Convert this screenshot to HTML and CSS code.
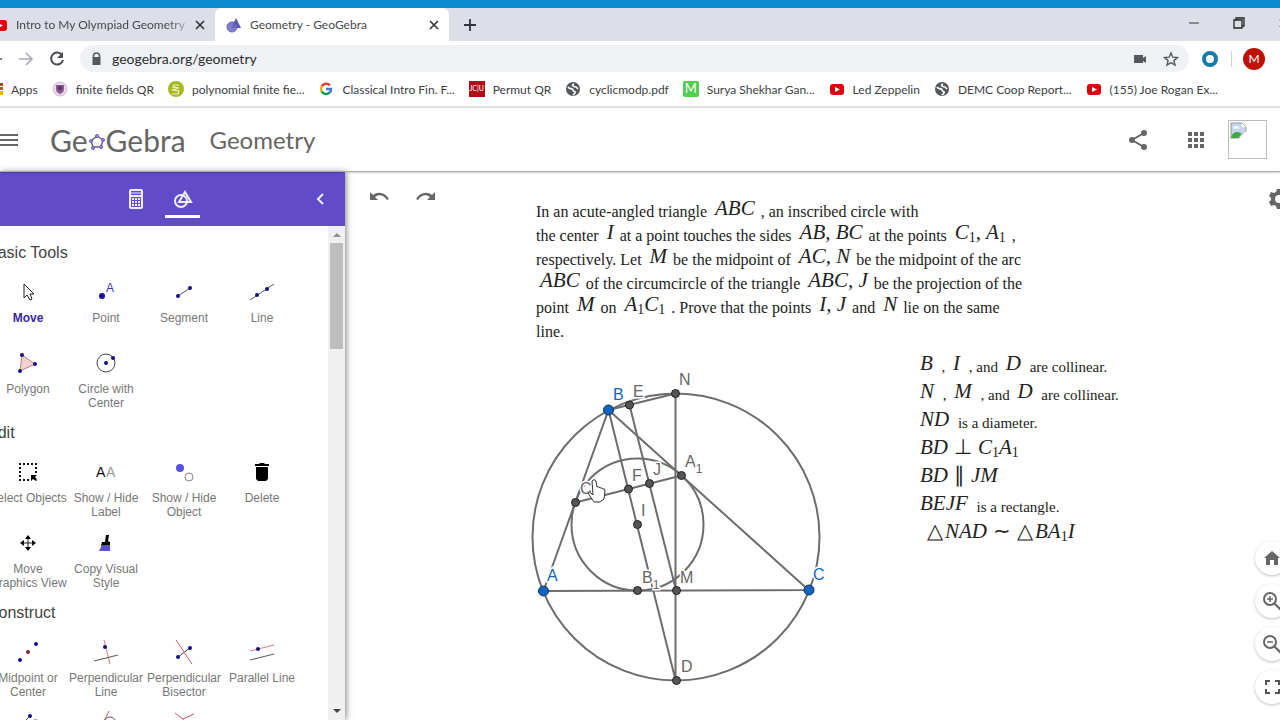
FILE: index.html
```html
<!DOCTYPE html>
<html lang="en">
<head>
    <meta charset="UTF-8">
    <meta name="viewport" content="width=device-width, initial-scale=1.0">
    <title>Geometry - GeoGebra</title>
    <link rel="stylesheet" href="styles.css">
</head>
<body>
    <svg class="defs" aria-hidden="true">
        <symbol id="youtube" viewBox="0 0 16 16">
            <rect x="1" y="3" width="14" height="11" rx="3" fill="#e0000c"/>
            <path d="M6 6l5 2.500-5 2.500z" fill="#fff"/>
        </symbol>
        <symbol id="globe" viewBox="0 0 16 16">
            <circle cx="8" cy="8" r="7" fill="#54575b"/>
            <path d="M3 6c2 3 5 1 5 3s3 1 2 3l-2 2M9 3c-3 1-1 3 2 3l2 2" fill="none" stroke="#fff" stroke-width="1.600"/>
        </symbol>
        <symbol id="close" viewBox="0 0 12 12">
            <path d="M2 2l8 8M10 2l-8 8" stroke="#33363a" stroke-width="1.700"/>
        </symbol>
    </svg>

    <div class="topline"></div>
    <div class="tabs">
        <div class="tab">
            <svg class="icon"><use href="#youtube"/></svg>
            <span class="tab-title fade">Intro to My Olympiad Geometry</span>
            <button class="tab-close" aria-label="Close tab"><svg><use href="#close"/></svg></button>
        </div>
        <div class="tab active">
            <svg class="icon" viewBox="0 0 16 16">
                <path d="M10 1l5 10H5z" fill="#5b55b8"/>
                <circle cx="6" cy="10" r="5" fill="#6b69c4" fill-opacity=".85" stroke="#6461a8"/>
            </svg>
            <span class="tab-title">Geometry - GeoGebra</span>
            <button class="tab-close" aria-label="Close tab"><svg><use href="#close"/></svg></button>
        </div>
        <button class="new-tab" aria-label="New tab"><svg viewBox="0 0 12 12"><path d="M6 0v12M0 6h12" stroke="#33363a" stroke-width="1.800"/></svg></button>
        <div class="window-buttons">
            <button aria-label="Minimize"><svg viewBox="0 0 12 12"><path d="M1 6h10" stroke="#333"/></svg></button>
            <button aria-label="Restore"><svg viewBox="0 0 12 12"><path d="M1 3h8v8H1zM3 3V1h8v8H9" fill="none" stroke="#222" stroke-width="1.300"/></svg></button>
            <button aria-label="Close window"><svg><use href="#close"/></svg></button>
        </div>
    </div>

    <div class="toolbar">
        <button aria-label="Back"><svg viewBox="0 0 16 16"><path d="M15 8H2M8 2L2 8l6 6" fill="none" stroke="#55585c" stroke-width="1.700"/></svg></button>
        <button aria-label="Forward"><svg viewBox="0 0 16 16"><path d="M1 8h12M8 2l6 6-6 6" fill="none" stroke="#aaacb0" stroke-width="1.700"/></svg></button>
        <button aria-label="Reload"><svg viewBox="0 0 16 16"><path d="M13 4a6 6 0 1 0 1 5" fill="none" stroke="#4a4d51" stroke-width="2"/><path d="M14 1v6H8z" fill="#4a4d51"/></svg></button>
        <div class="address">
            <svg class="lock" viewBox="0 0 12 14"><path d="M3 6V4a3 3 0 0 1 6 0v2" fill="none" stroke="#55585c" stroke-width="1.500"/><rect x="2" y="5" width="8" height="8" fill="#55585c"/></svg>
            <input type="text" aria-label="Address" value="geogebra.org/geometry">
            <svg class="camera" viewBox="0 0 16 16"><path d="M2 4h9v3l3-2v7l-3-2v2H2z" fill="#55585c"/></svg>
            <svg class="star" viewBox="0 0 16 16"><path d="M8 2l1.800 4.200 4.600.4-3.500 3 1.100 4.400L8 11.600 4 14l1.100-4.400-3.500-3 4.600-.4z" fill="none" stroke="#55585c" stroke-width="1.400"/></svg>
        </div>
        <span class="extension"></span>
        <span class="divider"></span>
        <button class="profile">M</button>
    </div>

    <nav class="bookmarks">
        <a href="#"><svg class="icon" viewBox="0 0 16 16"><path d="M0 2h4v4H0zM0 10h4v4H0z" fill="#7a9b3a"/><path d="M12 2h4v3h-4z" fill="#d93025"/><path d="M12 6h4v3h-4z" fill="#8a6d1a"/><path d="M12 10h4v4h-4z" fill="#f0b400"/></svg>Apps</a>
        <a href="#"><svg class="icon" viewBox="0 0 16 16"><circle cx="8" cy="8" r="7" fill="#e9d8ea" stroke="#d3b6ce"/><path d="M4 4h8v4c0 3-2 4-4 5-2-1-4-2-4-5z" fill="#8a5a8c"/><path d="M6 5h4v4H6z" fill="#5d3769"/></svg>finite fields QR</a>
        <a href="#"><svg class="icon" viewBox="0 0 16 16"><circle cx="8" cy="8" r="8" fill="#a8b820"/><path d="M11 4H6L5 6l6 1-7 2 7 1-1 3H4" fill="none" stroke="#f4f6d0" stroke-width="1.200"/></svg>polynomial finite fie...</a>
        <a href="#"><svg class="icon" viewBox="0 0 16 16"><g fill="none" stroke-width="2.500"><path d="M12 4.500A5 5 0 0 0 3.700 5.500" stroke="#dc4437"/><path d="M3.700 5.500a5 5 0 0 0 0 5" stroke="#f0b400"/><path d="M3.700 10.500a5 5 0 0 0 7.800 1.200" stroke="#17994f"/><path d="M11.500 11.700A5 5 0 0 0 13 8H8" stroke="#3f7ce0"/></g></svg>Classical Intro Fin. F...</a>
        <a href="#"><span class="jcu">JC|U</span>Permut QR</a>
        <a href="#"><svg class="icon"><use href="#globe"/></svg>cyclicmodp.pdf</a>
        <a href="#"><span class="mbox">M</span>Surya Shekhar Gan...</a>
        <a href="#"><svg class="icon"><use href="#youtube"/></svg>Led Zeppelin</a>
        <a href="#"><svg class="icon"><use href="#globe"/></svg>DEMC Coop Report...</a>
        <a href="#"><svg class="icon"><use href="#youtube"/></svg>(155) Joe Rogan Ex...</a>
    </nav>

    <header class="header">
        <button class="menu" aria-label="Menu"><svg viewBox="0 0 18 14"><path d="M0 2h18M0 7h18M0 12h18" stroke="#666" stroke-width="2"/></svg></button>
        <a href="#" class="logo">Ge<svg viewBox="0 0 18 18"><path d="M9 3l6 4-2 7H5L3 8z" fill="none" stroke="#666" stroke-width="1.500"/><g fill="#9b8fe8" stroke="#6557d2"><circle cx="9" cy="3" r="1.500"/><circle cx="15" cy="7" r="1.500"/><circle cx="13" cy="14" r="1.500"/><circle cx="5" cy="15" r="1.500"/><circle cx="3" cy="8" r="1.500"/></g></svg>Gebra</a>
        <h1>Geometry</h1>
        <div class="header-right">
            <button aria-label="Share"><svg viewBox="0 0 20 20"><path d="M16 3L4 10l12 7" fill="none" stroke="#666" stroke-width="2"/><g fill="#666"><circle cx="16" cy="3" r="3"/><circle cx="4" cy="10" r="3"/><circle cx="16" cy="17" r="3"/></g></svg></button>
            <button aria-label="Apps"><svg viewBox="0 0 20 20"><path d="M2 2h4v4H2zM8 2h4v4H8zM14 2h4v4h-4zM2 8h4v4H2zM8 8h4v4H8zM14 8h4v4h-4zM2 14h4v4H2zM8 14h4v4H8zM14 14h4v4h-4z" fill="#666"/></svg></button>
            <button class="avatar" aria-label="Account"><svg viewBox="0 0 16 16"><path d="M1 1h10l4 4v10H1z" fill="#c3d7f3" stroke="#999"/><path d="M3 6c0-3 5-3 6 0z" fill="#fff"/><path d="M1 14c3-6 7-5 10-3l-3 4H1z" fill="#43a843"/><path d="M11 1v4h4M8 16l8-8v8z" fill="#fff"/></svg></button>
        </div>
    </header>

    <main class="main">
        <aside class="sidebar">
            <div class="side-tabs">
                <button class="side-tab" aria-label="Algebra"><svg viewBox="0 0 16 20"><rect x="2" y="1" width="12" height="18" rx="1" fill="none" stroke="#f0edfb" stroke-width="2"/><path d="M2 4h12" stroke="#f0edfb" stroke-width="1"/><path d="M2 7h12" stroke="#f0edfb" stroke-width="2"/><path d="M4 10h2M7 10h2M10 10h2M4 13h2M7 13h2M10 13h2M4 16h2M7 16h2M10 16h2" stroke="#f0edfb" stroke-width="2"/></svg></button>
                <button class="side-tab selected" aria-label="Tools"><svg viewBox="0 0 20 20"><circle cx="8" cy="12" r="6" fill="none" stroke="#f0edfb" stroke-width="2"/><path d="M12 3l6 10H6z" fill="none" stroke="#f0edfb" stroke-width="2"/></svg></button>
                <button class="collapse" aria-label="Collapse"><svg viewBox="0 0 10 14"><path d="M8 2L3 7l5 5" fill="none" stroke="#f0edfb" stroke-width="2"/></svg></button>
            </div>
            <div class="side-body">
                <div class="tools">
                    <h2>Basic Tools</h2>
                    <div class="tool-grid">
                        <button class="tool current"><svg viewBox="0 0 24 24"><path d="M8 4v14l3-3 3 5 2-1-2-5h4z" fill="#fff" stroke="#222"/></svg>Move</button>
                        <button class="tool"><svg viewBox="0 0 24 24"><circle cx="8" cy="16" r="3" fill="#1412a0"/><text x="12" y="12" class="point-letter">A</text></svg>Point</button>
                        <button class="tool"><svg viewBox="0 0 24 24"><path d="M6 16l12-8" stroke="#555"/><circle cx="6" cy="16" r="2" fill="#111180"/><circle cx="18" cy="8" r="2" fill="#111180"/></svg>Segment</button>
                        <button class="tool"><svg viewBox="0 0 24 24"><path d="M0 20L24 4" stroke="#555"/><circle cx="7" cy="15" r="2" fill="#111180"/><circle cx="17" cy="9" r="2" fill="#111180"/></svg>Line</button>
                        <button class="tool"><svg viewBox="0 0 24 24"><path d="M6 4l13 9-15 7z" fill="#f3d2d2" stroke="#b9847c"/><g fill="#111180"><circle cx="6" cy="4" r="2"/><circle cx="19" cy="13" r="2"/><circle cx="4" cy="20" r="2"/></g></svg>Polygon</button>
                        <button class="tool"><svg viewBox="0 0 24 24"><circle cx="12" cy="12" r="9" fill="none" stroke="#444"/><circle cx="12" cy="12" r="2" fill="#111180"/><circle cx="19" cy="7" r="2" fill="#111180"/></svg>Circle with Center</button>
                    </div>
                    <h2>Edit</h2>
                    <div class="tool-grid">
                        <button class="tool"><svg viewBox="0 0 24 24"><path d="M3 4h18M3 20h11M4 3v18M20 3v11" fill="none" stroke="#111" stroke-width="2" stroke-dasharray="2 2"/><path d="M15 15h6l-2 2 2 3-1 1-3-2-2 2z" fill="#000"/></svg>Select Objects</button>
                        <button class="tool"><svg viewBox="0 0 24 24"><text x="2" y="17" class="label-a">A</text><text x="12" y="17" class="label-b">A</text></svg>Show / Hide Label</button>
                        <button class="tool"><svg viewBox="0 0 24 24"><circle cx="8" cy="8" r="4" fill="#5753df"/><circle cx="17" cy="17" r="4" fill="#fff" stroke="#888"/></svg>Show / Hide Object</button>
                        <button class="tool"><svg viewBox="0 0 24 24"><path d="M5 4h4l1-1h4l1 1h4v2H5zM6 7h12v12l-2 2H8l-2-2z" fill="#000"/></svg>Delete</button>
                        <button class="tool"><svg viewBox="0 0 24 24"><path d="M12 6v12M6 12h12" stroke="#222"/><path d="M12 4l3 4H9zM12 20l-3-4h6zM4 12l4-3v6zM20 12l-4 3V9z" fill="#000"/></svg>Move Graphics View</button>
                        <button class="tool"><svg viewBox="0 0 24 24"><path d="M12 4h3l-1 6 2 1v4H7l1-4h3z" fill="#000"/><path d="M8 14h8v6H5z" fill="#5651cf"/></svg>Copy Visual Style</button>
                    </div>
                    <h2>Construct</h2>
                    <div class="tool-grid">
                        <button class="tool"><svg viewBox="0 0 24 24"><circle cx="4" cy="20" r="2" fill="#111180"/><circle cx="12" cy="12" r="2" fill="#802030"/><circle cx="20" cy="4" r="2" fill="#111180"/></svg>Midpoint or Center</button>
                        <button class="tool"><svg viewBox="0 0 24 24"><path d="M10 0l6 24" stroke="#db7b89"/><path d="M0 21l24-6" stroke="#555"/><circle cx="11" cy="7" r="2" fill="#111180"/></svg>Perpendicular Line</button>
                        <button class="tool"><svg viewBox="0 0 24 24"><path d="M6 17l12-9" stroke="#444"/><path d="M4 0l16 24" stroke="#c95965"/><circle cx="6" cy="17" r="2" fill="#111180"/><circle cx="18" cy="8" r="2" fill="#111180"/></svg>Perpendicular Bisector</button>
                        <button class="tool"><svg viewBox="0 0 24 24"><path d="M0 11l24-6" stroke="#db7b89"/><path d="M0 20l24-6" stroke="#555"/><circle cx="8" cy="9" r="2" fill="#111180"/></svg>Parallel Line</button>
                        <button class="tool" aria-label="Angle Bisector"><svg viewBox="0 0 24 24"><path d="M14 5L6 13" stroke="#444"/><circle cx="14" cy="5" r="2" fill="#111180"/><path d="M18 8l6 2" stroke="#999"/></svg></button>
                        <button class="tool" aria-label="Tangents"><svg viewBox="0 0 24 24"><path d="M15 0L6 18" stroke="#c95965"/><circle cx="16" cy="12" r="6" fill="none" stroke="#555"/></svg></button>
                        <button class="tool" aria-label="Locus"><svg viewBox="0 0 24 24"><path d="M3 2l8 6 11-5M11 8v12" fill="none" stroke="#c95965"/></svg></button>
                    </div>
                </div>
                <div class="scrollbar">
                    <svg viewBox="0 0 8 6"><path d="M4 1l4 4H0z" fill="#909090"/></svg>
                    <div class="thumb"></div>
                    <svg viewBox="0 0 8 6"><path d="M0 1h8L4 5z" fill="#444"/></svg>
                </div>
            </div>
        </aside>

        <section class="canvas">
            <div class="history">
                <button aria-label="Undo"><svg viewBox="0 0 22 14"><path d="M2 3v8h8L7 8c4-3 9-2 12 3l2-1C17 3 10 2 5 6z" fill="#666"/></svg></button>
                <button aria-label="Redo"><svg viewBox="0 0 22 14"><path d="M20 3v8h-8l3-3C11 5 6 6 3 11l-2-1C5 3 12 2 17 6z" fill="#666"/></svg></button>
            </div>
            <button class="settings" aria-label="Settings"><svg viewBox="0 0 20 20"><path d="M8 0h4l1 3 2 1 3-1 2 4-2 2v2l2 2-2 4-3-1-2 1-1 3H8l-1-3-2-1-3 1-2-4 2-2V9L0 7l2-4 3 1 2-1z" fill="#666"/><circle cx="10" cy="10" r="4" fill="#fff"/></svg></button>

            <div class="problem">
                In an acute-angled triangle <i>ABC</i> , an inscribed circle with<br>
                the center <i>I</i> at a point touches the sides <i>AB, BC</i> at the points <i>C<sub>1</sub>, A<sub>1</sub></i> ,<br>
                respectively. Let <i>M</i> be the midpoint of <i>AC, N</i> be the midpoint of the arc<br>
                <i>ABC</i> of the circumcircle of the triangle <i>ABC, J</i> be the projection of the<br>
                point <i>M</i> on <i>A<sub>1</sub>C<sub>1</sub></i> . Prove that the points <i>I, J</i> and <i>N</i> lie on the same<br>
                line.
            </div>

            <svg class="figure" viewBox="520 360 320 340" role="img" aria-label="Triangle ABC with incircle and circumcircle">
                <g class="lines">
                    <circle cx="676" cy="537" r="143.500"/>
                    <circle cx="637.500" cy="524.500" r="66"/>
                    <path d="M543.500 591L608.500 410 808.500 590z"/>
                    <path d="M608.500 410L675.500 393.500V680z"/>
                    <path d="M629.500 405L676 590"/>
                    <path d="M575.500 502.500L681.500 475.500"/>
                </g>
                <g class="points">
                    <circle cx="629.500" cy="405" r="4"/>
                    <circle cx="675.500" cy="393.500" r="4"/>
                    <circle cx="681.500" cy="475.500" r="4"/>
                    <circle cx="649.500" cy="483.500" r="4"/>
                    <circle cx="628.500" cy="489" r="4"/>
                    <circle cx="575.500" cy="502.500" r="4"/>
                    <circle cx="637.500" cy="524.500" r="4"/>
                    <circle cx="637.500" cy="590.500" r="4"/>
                    <circle cx="676.500" cy="590.500" r="4"/>
                    <circle cx="676.500" cy="680.500" r="4"/>
                </g>
                <g class="points free">
                    <circle cx="608.500" cy="410" r="5"/>
                    <circle cx="543.500" cy="591" r="5"/>
                    <circle cx="809" cy="590" r="5"/>
                </g>
                <g class="labels">
                    <text x="633" y="397">E</text>
                    <text x="679" y="385">N</text>
                    <text x="685" y="467">A<tspan class="index" dy="6">1</tspan></text>
                    <text x="653" y="475">J</text>
                    <text x="632" y="481">F</text>
                    <text x="580" y="494">C</text>
                    <text x="641" y="516">I</text>
                    <text x="642" y="583">B<tspan class="index" dy="6">1</tspan></text>
                    <text x="680" y="583">M</text>
                    <text x="681" y="672">D</text>
                </g>
                <g class="labels free">
                    <text x="613" y="400">B</text>
                    <text x="547" y="581">A</text>
                    <text x="813" y="580">C</text>
                </g>
                <path class="hand" d="M592 481q2-3 4 0l1 6q2-1 3 1 2-1 3 1 2-1 2 2l-1 8-4 3h-6l-6-9q1-2 3 0l2 2z"/>
            </svg>

            <ul class="notes">
                <li><i>B</i> , <i>I</i> , and <i>D</i> are collinear.</li>
                <li><i>N</i> , <i>M</i> , and <i>D</i> are collinear.</li>
                <li><i>ND</i> is a diameter.</li>
                <li class="formula"><i>BD</i><b class="relation">⊥</b><i>C<sub>1</sub>A<sub>1</sub></i></li>
                <li class="formula"><i>BD</i><b class="relation">∥</b><i>JM</i></li>
                <li><i>BEJF</i> is a rectangle.</li>
                <li class="formula similar"><b>△</b><i>NAD</i><b class="relation">∼</b><b>△</b><i>BA<sub>1</sub>I</i></li>
            </ul>

            <div class="view-buttons">
                <button aria-label="Home"><svg viewBox="0 0 20 20"><path d="M2 10l8-7 8 7h-2v7h-4v-5H8v5H4v-7z" fill="#666"/></svg></button>
                <button aria-label="Zoom in"><svg viewBox="0 0 20 20"><circle cx="8" cy="8" r="6" fill="none" stroke="#666" stroke-width="2"/><path d="M12 12l7 7" stroke="#666" stroke-width="2"/><path d="M5 8h6M8 5v6" stroke="#666" stroke-width="1.500"/></svg></button>
                <button aria-label="Zoom out"><svg viewBox="0 0 20 20"><circle cx="8" cy="8" r="6" fill="none" stroke="#666" stroke-width="2"/><path d="M12 12l7 7" stroke="#666" stroke-width="2"/><path d="M5 8h6" stroke="#666" stroke-width="1.500"/></svg></button>
                <button aria-label="Full screen"><svg viewBox="0 0 20 20"><path d="M4 8V4h4M13 4h4v4M17 12v4h-4M8 16H4v-4" fill="none" stroke="#555" stroke-width="2"/></svg></button>
            </div>
        </section>
    </main>
</body>
</html>
```
FILE: styles.css
```css
* {
    box-sizing: border-box;
}
body {
    margin: 0;
    height: 100vh;
    display: flex;
    flex-direction: column;
    overflow: hidden;
    background-color: #fff;
    font-family: Lato, "Open Sans", sans-serif;
    font-size: 12px;
    color: #3c4043;
}
button {
    border: 0;
    padding: 0;
    background: none;
    font: inherit;
    color: inherit;
}
svg {
    display: block;
    flex: none;
}
.defs {
    position: absolute;
    width: 0;
    height: 0;
}
.icon {
    width: 16px;
    height: 16px;
}

/* browser frame */
.topline {
    flex: none;
    height: 8px;
    background-color: #0b8bd2;
}
.tabs {
    flex: none;
    display: flex;
    align-items: center;
    height: 33px;
    background-color: #dcdfe7;
}
.tab {
    display: flex;
    align-items: center;
    width: 223px;
    height: 33px;
    margin-left: -8px;
    padding-right: 9px;
    color: #45484d;
}
.tab .tab-title {
    flex: 1;
    margin-left: 8px;
    white-space: nowrap;
    overflow: hidden;
}
.tab .fade {
    -webkit-mask-image: linear-gradient(to right, #000 85%, transparent);
    mask-image: linear-gradient(to right, #000 85%, transparent);
}
.tab.active {
    width: 234px;
    margin-left: 0;
    padding-left: 11px;
    background-color: #fff;
    border-radius: 7px 7px 0 0;
}
.tab-close svg, .new-tab svg, .window-buttons svg {
    width: 12px;
    height: 12px;
}
.new-tab {
    margin-left: 15px;
}
.window-buttons {
    display: flex;
    gap: 33px;
    margin-left: auto;
    margin-right: -10px;
    padding-bottom: 4px;
}
.toolbar {
    flex: none;
    display: flex;
    align-items: center;
    height: 35px;
    margin-left: -13px;
    padding-right: 15px;
}
.toolbar svg {
    width: 16px;
    height: 16px;
}
.toolbar > button {
    margin-right: 15px;
}
.address {
    flex: 1;
    display: flex;
    align-items: center;
    height: 27px;
    margin-right: 13px;
    padding: 0 10px;
    border-radius: 14px;
    background-color: #eff1f5;
}
.address .lock {
    width: 13px;
    height: 14px;
}
.address input {
    flex: 1;
    border: 0;
    padding: 0;
    margin-left: 9px;
    background: none;
    font: 14px Lato, sans-serif;
    color: #2b2d30;
}
.address .camera {
    margin-right: 15px;
}
.extension {
    width: 16px;
    height: 16px;
    border: 4px solid #137cab;
    border-radius: 50%;
}
.divider {
    width: 1px;
    height: 16px;
    margin: 0 11px 0 13px;
    background-color: #d0d2d6;
}
.toolbar .profile {
    width: 22px;
    height: 22px;
    margin-right: 0;
    border-radius: 50%;
    background-color: #bd1206;
    color: #fff;
}
.bookmarks {
    flex: none;
    display: flex;
    align-items: center;
    justify-content: space-between;
    height: 32px;
    margin-left: -13px;
    padding: 0 62px 4px 0;
    border-bottom: 2px solid #e2e3e6;
}
.bookmarks a {
    display: flex;
    align-items: center;
    gap: 8px;
    color: #3c4043;
    text-decoration: none;
    white-space: nowrap;
}
.jcu, .mbox {
    width: 16px;
    height: 16px;
    background-color: #b00d18;
    color: #fff;
    font-size: 7px;
    line-height: 15px;
    text-align: center;
}
.mbox {
    background-color: #4ed04e;
    border-radius: 2px;
    font-size: 13px;
}

/* app header */
.header {
    flex: none;
    display: flex;
    align-items: center;
    height: 64px;
    padding-right: 13px;
    border-bottom: 1px solid #aaa;
    box-shadow: 0 1px 2px rgba(0,0,0,0.2);
    z-index: 1;
    color: #666;
}
.header .menu svg {
    width: 18px;
    height: 14px;
}
.logo {
    display: flex;
    align-items: center;
    margin-left: 32px;
    color: #666;
    text-decoration: none;
    font-family: Lato, sans-serif;
    font-size: 30px;
    line-height: 32px;
}
.logo svg {
    width: 18px;
    height: 18px;
    margin-top: 5px;
}
.header h1 {
    margin: 0 0 0 24px;
    font-family: Lato, sans-serif;
    font-size: 24px;
    line-height: 32px;
    font-weight: 400;
}
.header-right {
    display: flex;
    align-items: center;
    margin-left: auto;
    gap: 38px;
}
.header-right svg {
    width: 20px;
    height: 20px;
}
.header-right .avatar {
    width: 39px;
    height: 39px;
    margin-left: -16px;
    border: 1px solid #bbb;
}
.header-right .avatar svg {
    width: 17px;
    height: 17px;
    margin: -18px 0 0 1px;
}
.main {
    flex: 1;
    display: flex;
    min-height: 0;
}

/* sidebar */
.sidebar {
    flex: none;
    display: flex;
    flex-direction: column;
    width: 345px;
    box-shadow: 1px 0 6px rgba(0,0,0,0.5);
    font-family: "Liberation Sans", Arial, sans-serif;
}
.side-tabs {
    flex: none;
    display: flex;
    align-items: center;
    height: 54px;
    padding: 0 20px 0 118px;
    gap: 12px;
    background-color: #614bc8;
}
.side-tab {
    display: flex;
    justify-content: center;
    width: 35px;
    padding: 8px 0 6px;
    border-bottom: 3px solid transparent;
}
.side-tab.selected {
    border-color: #fff;
}
.side-tab svg {
    width: 20px;
    height: 20px;
}
.collapse {
    margin-left: auto;
}
.collapse svg {
    width: 10px;
    height: 14px;
}
.side-body {
    flex: 1;
    display: flex;
    min-height: 0;
    overflow: hidden;
}
.tools {
    flex: 1;
    margin-left: -13px;
    padding-top: 16px;
    overflow: hidden;
}
.tools h2 {
    margin: 0;
    height: 38px;
    font-size: 16px;
    line-height: 22px;
    font-weight: 400;
    color: #444;
}
.tool-grid {
    display: grid;
    grid-template-columns: repeat(4, 78px);
    padding-left: 2px;
}
.tool {
    display: flex;
    flex-direction: column;
    align-items: center;
    min-height: 71px;
    font-size: 12px;
    line-height: 14px;
    text-align: center;
    color: #777;
}
.tool svg {
    width: 24px;
    height: 24px;
    margin-bottom: 7px;
}
.tool.current {
    color: #38289f;
    font-weight: bold;
}
.point-letter {
    font-size: 12px;
    font-weight: 400;
    fill: #3d35b5;
}
.label-a, .label-b {
    font-size: 14px;
    fill: #111;
}
.label-b {
    fill: #999;
}
.scrollbar {
    display: flex;
    flex-direction: column;
    align-items: center;
    width: 17px;
    padding: 6px 0;
    background-color: #f0f0f0;
}
.scrollbar svg {
    width: 8px;
    height: 6px;
}
.thumb {
    width: 13px;
    height: 106px;
    margin-top: 5px;
    margin-bottom: auto;
    background-color: #bebebe;
}

/* drawing area: everything is placed freely on it */
.canvas {
    flex: 1;
    position: relative;
    overflow: hidden;
    margin-left: 7px;
    font-family: "Liberation Serif", "Times New Roman", serif;
    font-size: 15px;
    color: #222;
}
.history {
    position: absolute;
    left: 16px;
    top: 17px;
    display: flex;
    gap: 25px;
}
.history svg {
    width: 22px;
    height: 14px;
}
.settings {
    position: absolute;
    right: -9px;
    top: 17px;
}
.settings svg {
    width: 20px;
    height: 20px;
}
.problem {
    position: absolute;
    left: 184px;
    top: 28px;
    font-size: 16px;
    line-height: 24px;
    white-space: nowrap;
}
.canvas i, .canvas b {
    margin: 0 2px 0 4px;
    font-size: 21px;
    font-weight: 400;
    line-height: 0;
    vertical-align: 2px;
}
.canvas sub {
    font-size: 14px;
    font-style: normal;
    line-height: 0;
    vertical-align: -3px;
}
.figure {
    position: absolute;
    left: 168px;
    top: 188px;
    width: 320px;
    height: 340px;
}
.lines {
    fill: none;
    stroke: #6d6d6d;
    stroke-width: 2;
}
.points {
    fill: #555;
    stroke: #222;
}
.points.free {
    fill: #1565c0;
    stroke: #0b2f5c;
}
.labels {
    font-family: "Liberation Sans", Arial, sans-serif;
    font-size: 16px;
    fill: #666;
    stroke: #fff;
    stroke-width: 3;
    paint-order: stroke;
}
.labels.free {
    fill: #1565c0;
}
.index {
    font-size: 12px;
}
.hand {
    fill: #fff;
    stroke: #333;
}
.notes {
    position: absolute;
    left: 564px;
    top: 181px;
    margin: 0;
    padding: 0;
    list-style: none;
    line-height: 28px;
    white-space: nowrap;
}
.notes i {
    margin: 0 5px 0 4px;
}
.notes .formula i, .notes .formula b {
    margin: 0 1px;
}
.notes .formula .relation {
    margin: 0 5px;
}
.notes .formula {
    padding-left: 3px;
}
.notes .similar {
    padding-left: 10px;
}
.view-buttons {
    position: absolute;
    right: -9px;
    bottom: 16px;
    display: flex;
    flex-direction: column;
    gap: 9px;
}
.view-buttons button {
    width: 34px;
    height: 34px;
    padding: 7px;
    border-radius: 50%;
    background-color: #fff;
    box-shadow: 0 1px 3px rgba(0,0,0,0.25);
}
.view-buttons svg {
    width: 20px;
    height: 20px;
}
```
